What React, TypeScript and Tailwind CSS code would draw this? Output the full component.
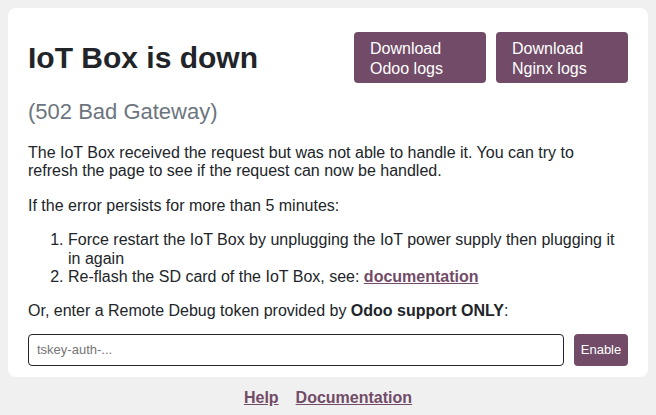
const purple = "bg-[#714b67]";

function LogButton({ top, bottom }: { top: string; bottom: string }) {
  return (
    <button className={`${purple} w-[132px] rounded-[4px] px-4 pb-[5px] pt-[7px] text-left text-[16px] leading-[19.5px] text-white`}>
      {top}
      <br />
      {bottom}
    </button>
  );
}

export default function App() {
  return (
    <div className="min-h-[415px] bg-[#f0f0f0] pt-2 font-['Liberation_Sans',Arial,sans-serif] text-[16px] leading-[18.4px] text-[#212529]">
      <div className="mx-2 rounded-lg bg-white px-5 pb-[11px] pt-6">
        <div className="flex h-[51px] items-center justify-between">
          <h1 className="text-[30px] font-bold leading-[36px]">IoT Box is down</h1>
          <div className="flex gap-[10px]">
            <LogButton top="Download" bottom="Odoo logs" />
            <LogButton top="Download" bottom="Nginx logs" />
          </div>
        </div>

        <h2 className="mt-[16px] text-[22px] leading-[26px] text-[#6c757d]">(502 Bad Gateway)</h2>

        <p className="mt-[19px]">
          The IoT Box received the request but was not able to handle it. You can try to refresh the page to see if
          the request can now be handled.
        </p>
        <p className="mt-4">If the error persists for more than 5 minutes:</p>
        <ol className="mt-4 list-decimal pl-10">
          <li>
            Force restart the IoT Box by unplugging the IoT power supply then plugging it
            <br />
            in again
          </li>
          <li>
            Re-flash the SD card of the IoT Box, see:{" "}
            <a href="#" className="font-bold text-[#714b67] underline">
              documentation
            </a>
          </li>
        </ol>
        <p className="mt-4">
          Or, enter a Remote Debug token provided by <b>Odoo support ONLY</b>:
        </p>

        <div className="mt-[13px] flex gap-[10px]">
          <input
            placeholder="tskey-auth-..."
            className="h-8 flex-1 rounded-[4px] border border-[#212529] px-2 font-['Liberation_Sans',Arial,sans-serif] text-[13px] placeholder:text-[#757575] focus:outline-none"
          />
          <button className={`${purple} h-8 w-[54px] rounded-[4px] font-['Liberation_Sans',Arial,sans-serif] text-[13px] text-white`}>
            Enable
          </button>
        </div>
      </div>

      <div className="mt-[12px] flex justify-center gap-[17px] font-bold">
        <a href="#" className="text-[#714b67] underline">
          Help
        </a>
        <a href="#" className="text-[#714b67] underline">
          Documentation
        </a>
      </div>
    </div>
  );
}
